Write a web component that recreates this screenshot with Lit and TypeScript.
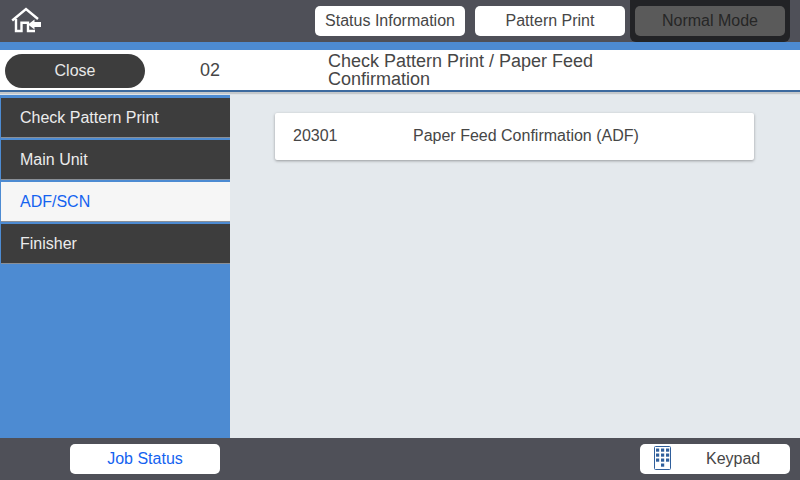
import { LitElement, html, css, svg } from "lit";
import { customElement } from "lit/decorators.js";

const keys: [number, number][] = [];
for (let r = 0; r < 4; r++) for (let c = 0; c < 3; c++) keys.push([c, r]);

@customElement("app-root")
export class AppRoot extends LitElement {
  static styles = css`
    :host {
      display: flex;
      flex-direction: column;
      width: 800px;
      height: 480px;
      overflow: hidden;
      font-family: "Liberation Sans", Arial, sans-serif;
      font-size: 16px;
      color: #464646;
      background: #e4e9ed;
    }
    .top {
      height: 42px;
      background: #4f5058;
      display: flex;
      align-items: flex-start;
      flex: none;
    }
    .home {
      width: 315px;
      height: 42px;
      padding: 7px 0 0 10px;
      box-sizing: border-box;
      flex: none;
    }
    .home svg { display: block; }
    .btn {
      width: 150px;
      height: 30px;
      background: #fff;
      border-radius: 5px;
      display: flex;
      align-items: center;
      justify-content: center;
      flex: none;
    }
    .top > .btn { margin-top: 6px; margin-right: 10px; }
    .mode {
      width: 160px;
      height: 42px;
      background: #222326;
      border-radius: 0 0 6px 6px;
      margin-left: -5px;
      padding: 6px 5px;
      box-sizing: border-box;
      flex: none;
    }
    .mode .btn { background: #5a5a5a; color: #262626; }
    .strip { height: 8px; background: #4d8bd2; flex: none; }
    .title {
      height: 40px;
      background: #fff;
      border-bottom: 2px solid #3c6a9f;
      box-shadow: 0 2px 1px #c4c8cb;
      display: flex;
      align-items: center;
      flex: none;
      position: relative;
      z-index: 1;
      font-size: 18px;
    }
    .close {
      width: 140px;
      height: 34px;
      margin: 2px 0 0 5px;
      border-radius: 17px;
      background: #3d3d3d;
      color: #e8e8e8;
      display: flex;
      align-items: center;
      justify-content: center;
      font-size: 16px;
      flex: none;
    }
    .num { width: 130px; text-align: center; flex: none; }
    .heading {
      width: 300px;
      margin-left: 53px;
      line-height: 18px;
      flex: none;
    }
    .main { flex: 1; display: flex; min-height: 0; padding-top: 3px; }
    .side {
      width: 230px;
      background: #4d8bd2;
      padding: 3px 0 0 1px;
      box-sizing: border-box;
      display: flex;
      flex-direction: column;
      gap: 2px;
      flex: none;
    }
    .item {
      height: 40px;
      box-sizing: border-box;
      background: #3d3d3d;
      border-bottom: 1px solid #8a8f96;
      color: #ececec;
      display: flex;
      align-items: center;
      padding-left: 19px;
      flex: none;
    }
    .item.on { background: #f6f6f6; color: #1463f0; }
    .content { flex: 1; padding: 18px 46px 0 45px; box-sizing: border-box; }
    .row {
      height: 47px;
      box-sizing: border-box;
      background: #fff;
      border-radius: 2px;
      box-shadow: 0 1px 3px rgba(0, 0, 0, 0.35);
      display: flex;
      align-items: center;
      padding: 0 0 2px 18px;
    }
    .code { width: 120px; flex: none; }
    .foot {
      height: 42px;
      background: #4f5058;
      display: flex;
      justify-content: space-between;
      padding: 6px 10px 0 70px;
      box-sizing: border-box;
      flex: none;
    }
    .job { color: #1463f0; }
    .keypad { justify-content: flex-start; padding-left: 14px; box-sizing: border-box; }
    .keypad span { margin-left: 35px; }
    .keypad svg { flex: none; display: block; margin-bottom: 2px; }
  `;

  render() {
    const items = ["Check Pattern Print", "Main Unit", "ADF/SCN", "Finisher"];
    return html`
      <div class="top">
        <div class="home">
          <svg width="32" height="26" viewBox="0 0 32 26">
            <path d="M2.2 13.5 L16 2 L28 12" fill="none" stroke="#fff" stroke-width="2.4" />
            <path d="M6 12 V24 H11.5 V15.7 H18 V24 H25" fill="none" stroke="#fff" stroke-width="2.4" />
            <path d="M18 17.5 L24.5 12.5 V15 H31 V20 H24.5 V22.5 Z" fill="#fff" />
          </svg>
        </div>
        <div class="btn">Status Information</div>
        <div class="btn">Pattern Print</div>
        <div class="mode"><div class="btn">Normal Mode</div></div>
      </div>
      <div class="strip"></div>
      <div class="title">
        <div class="close">Close</div>
        <div class="num">02</div>
        <div class="heading">Check Pattern Print / Paper Feed Confirmation</div>
      </div>
      <div class="main">
        <div class="side">
          ${items.map((t) => html`<div class="item ${t === "ADF/SCN" ? "on" : ""}">${t}</div>`)}
        </div>
        <div class="content">
          <div class="row"><div class="code">20301</div><div>Paper Feed Confirmation (ADF)</div></div>
        </div>
      </div>
      <div class="foot">
        <div class="btn job">Job Status</div>
        <div class="btn keypad">
          <svg width="17" height="24" viewBox="0 0 17 24">
            <rect x="0.5" y="0.5" width="16" height="23" rx="1" fill="none" stroke="#2f5f9c" />
            ${keys.map(([c, r]) =>
              r === 3 && c !== 1 ? "" : svg`<rect x=${2 + c * 5} y=${2.5 + r * 5} width="3.2" height="3.2" fill="#2f5f9c" />`
            )}
          </svg>
          <span>Keypad</span>
        </div>
      </div>
    `;
  }
}
